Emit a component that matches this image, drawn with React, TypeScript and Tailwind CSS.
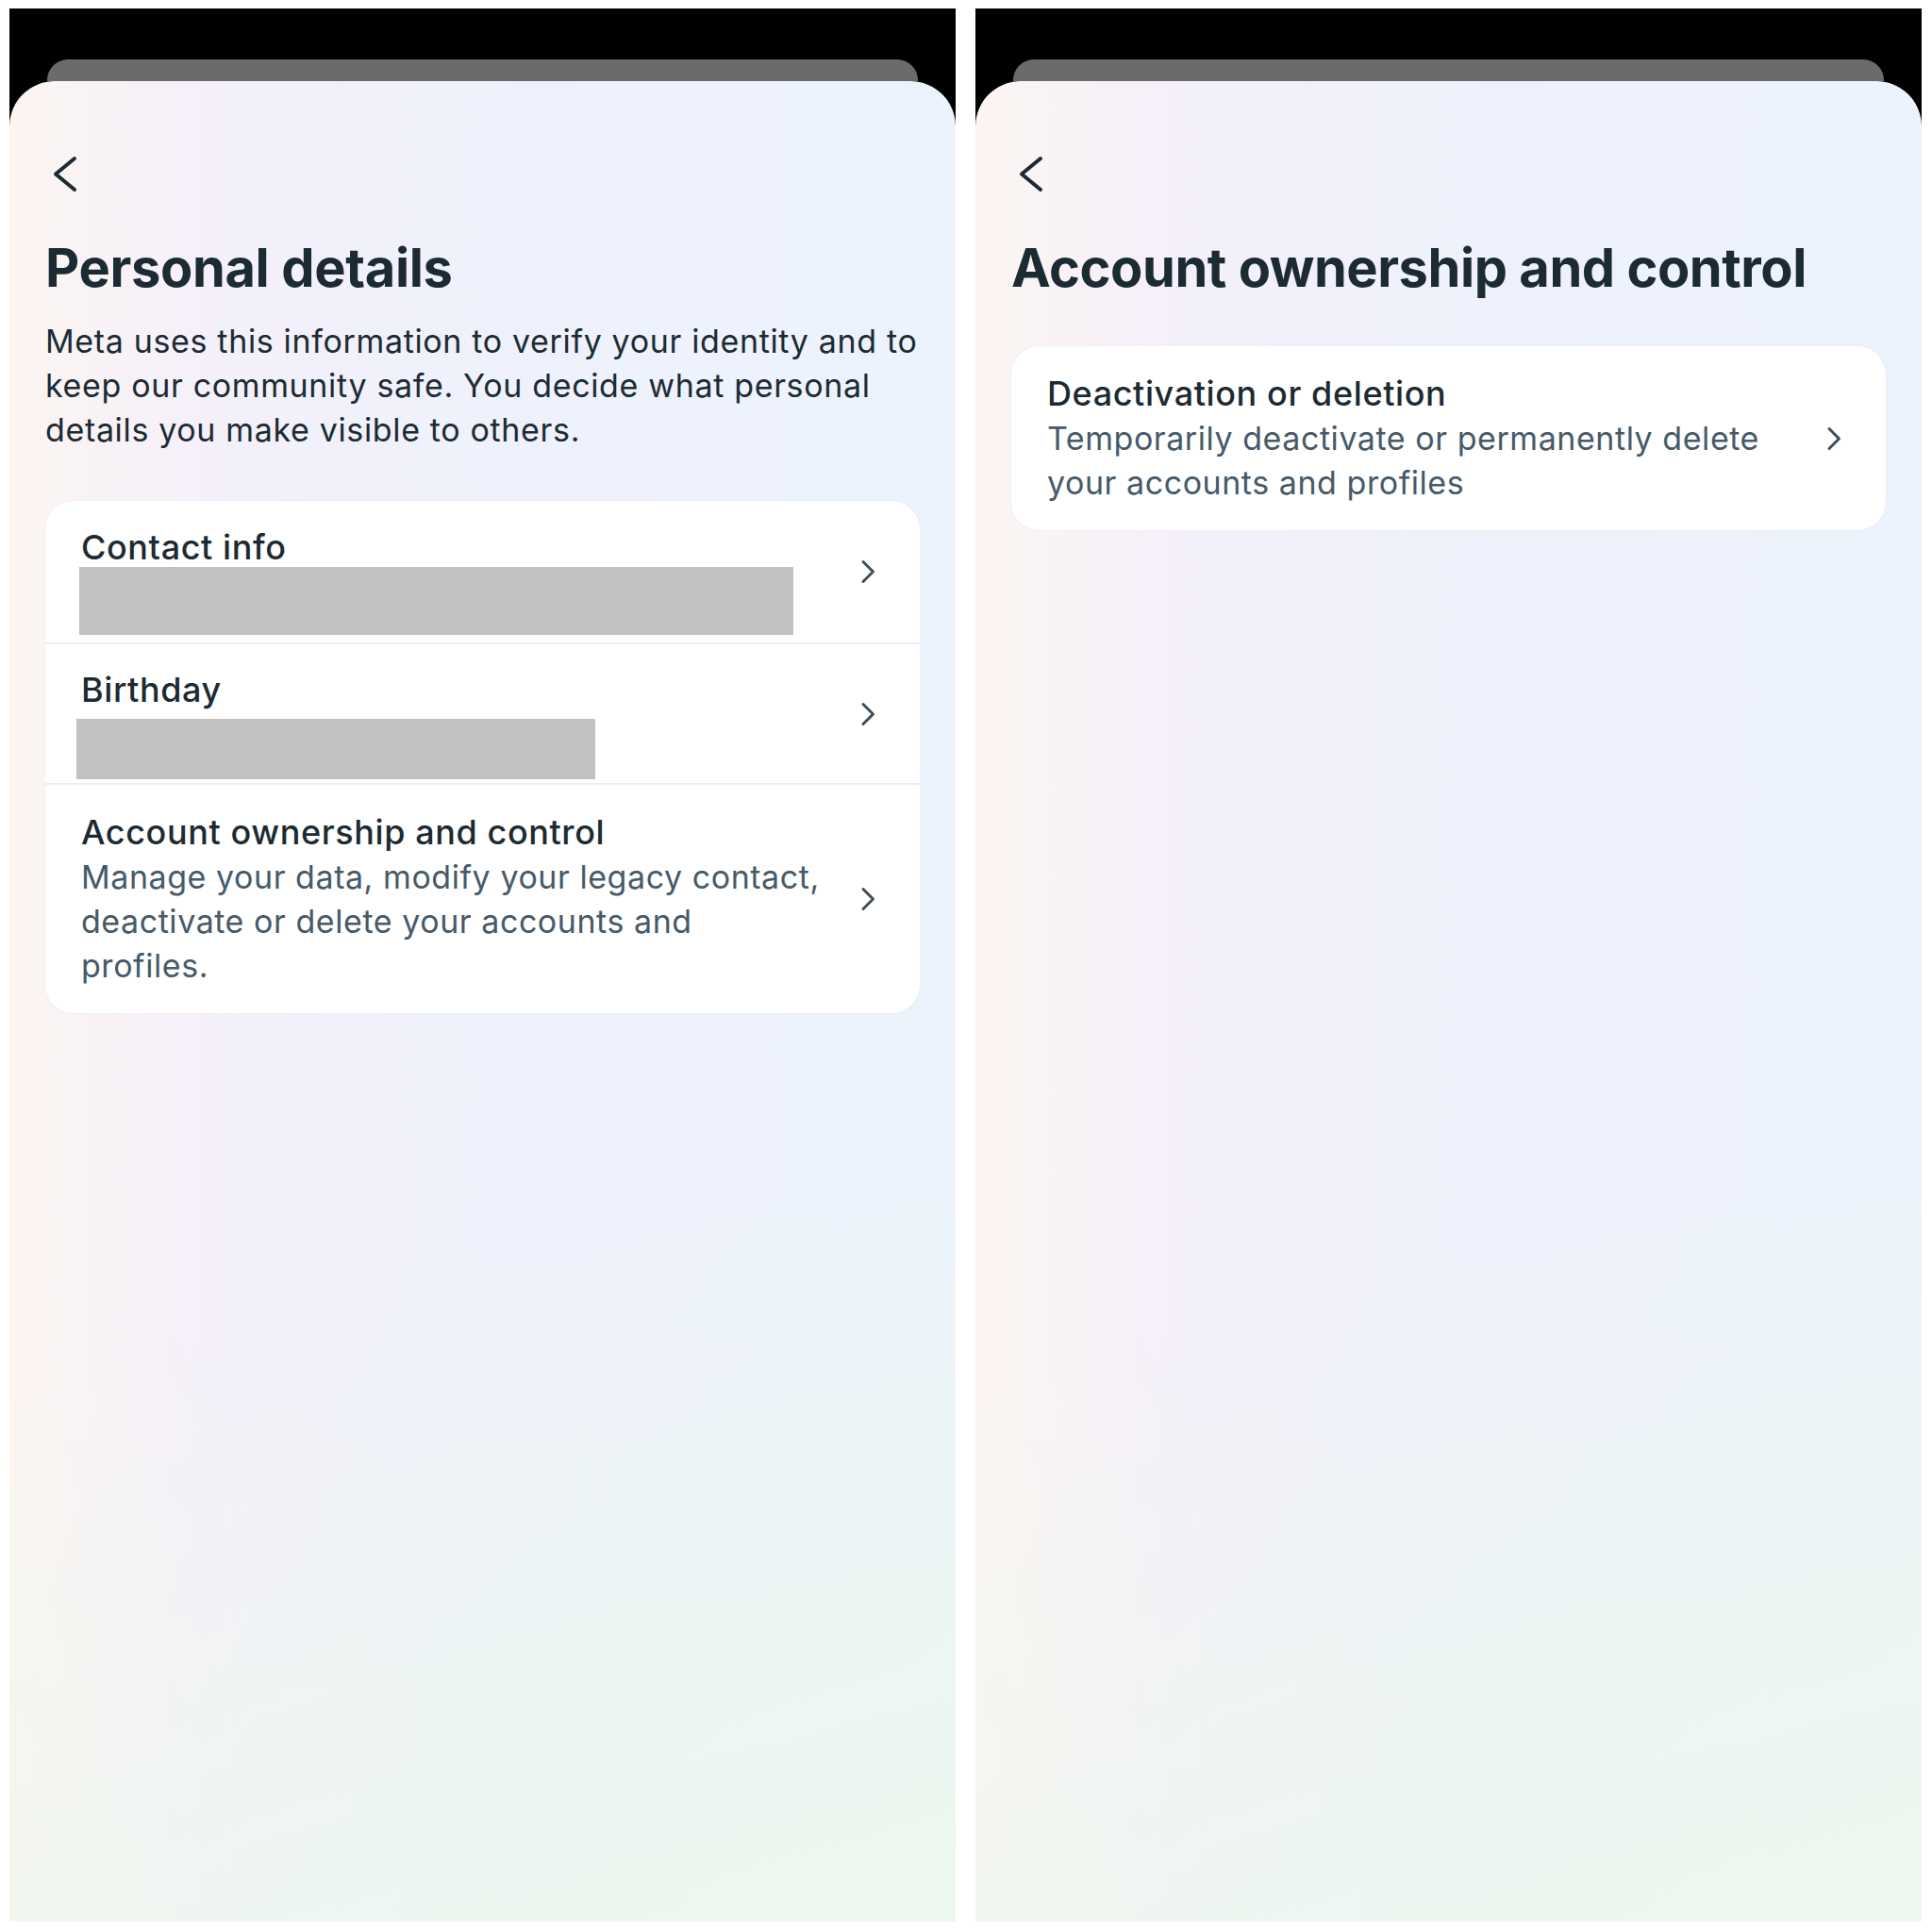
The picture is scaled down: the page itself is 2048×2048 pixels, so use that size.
import * as React from "react";

const font = "font-['Inter','Noto_Sans',sans-serif]";

function BackArrow() {
  return (
    <svg width="28" height="42" viewBox="0 0 28 42" className="ml-[7px] mt-[78px] block">
      <path
        d="M24 4 L4 20.5 L24 37"
        fill="none"
        stroke="#1c2b33"
        strokeWidth="4"
        strokeLinecap="round"
        strokeLinejoin="round"
      />
    </svg>
  );
}

function Chevron() {
  return (
    <svg width="18" height="28" viewBox="0 0 18 28" className="shrink-0">
      <path
        d="M4 3.5 L14.5 14 L4 24.5"
        fill="none"
        stroke="#3d4f5c"
        strokeWidth="3"
        strokeLinecap="round"
        strokeLinejoin="round"
      />
    </svg>
  );
}

function PhoneShell({ children }: { children: React.ReactNode }) {
  return (
    <div className="flex h-[2028px] w-[1003px] flex-col bg-black pt-[54px]">
      <div className="mx-[40px] h-[23px] rounded-t-[22px] bg-[#6b6b6b]" />
      <div className="flex-1 rounded-t-[48px] bg-[linear-gradient(165deg,rgba(255,255,255,0)_62%,rgba(236,248,237,0.95)_100%),linear-gradient(90deg,#fcf5f2_0%,#f5f0fa_20%,#eff1fb_45%,#ecf3fd_100%)] px-[38px]">
        <BackArrow />
        {children}
      </div>
    </div>
  );
}

function SettingRow({
  children,
  className,
}: {
  children: React.ReactNode;
  className: string;
}) {
  return (
    <div className="flex items-center border-[#eceef1] pl-[38px] pr-[46px] [&+&]:border-t-2">
      <div className={`min-w-0 flex-1 ${className}`}>{children}</div>
      <Chevron />
    </div>
  );
}

const rowTitle = "text-[36px] font-medium leading-[47px] tracking-[0.6px] text-[#1c2b33]";
const rowSub = "whitespace-nowrap text-[34px] leading-[47px] tracking-[0.55px] text-[#465a69]";

function PersonalDetails() {
  return (
    <PhoneShell>
      <h1 className="mt-[44px] text-[56px] font-bold leading-[68px] tracking-[-0.35px] text-[#1c2b33]">
        Personal details
      </h1>
      <p className="mt-[20px] whitespace-nowrap text-[34px] leading-[47px] tracking-[0.65px] text-[#1c2b33]">
        Meta uses this information to verify your identity and to
        <br />
        keep our community safe. You decide what personal
        <br />
        details you make visible to others.
      </p>

      <div className="mt-[52px] overflow-hidden rounded-[30px] bg-white shadow-[0_0_3px_rgba(30,50,80,0.05)]">
        <SettingRow className="pb-[8px] pt-[26px]">
          <p className={rowTitle}>Contact info</p>
          <div className="-mt-[3px] ml-[-2px] h-[72px] w-[757px] bg-[#c1c1c1]" />
        </SettingRow>

        <SettingRow className="pb-[4px] pt-[25px]">
          <p className={rowTitle}>Birthday</p>
          <div className="ml-[-5px] mt-[7px] h-[64px] w-[550px] bg-[#c1c1c1]" />
        </SettingRow>

        <SettingRow className="pb-[27px] pt-[27px]">
          <p className={rowTitle}>Account ownership and control</p>
          <p className={rowSub}>
            Manage your data, modify your legacy contact,
            <br />
            deactivate or delete your accounts and
            <br />
            profiles.
          </p>
        </SettingRow>
      </div>
    </PhoneShell>
  );
}

function AccountOwnership() {
  return (
    <PhoneShell>
      <h1 className="mt-[44px] whitespace-nowrap text-[56px] font-bold leading-[68px] tracking-[-0.45px] text-[#1c2b33]">
        Account ownership and control
      </h1>

      <div className="mt-[49px] rounded-[30px] bg-white shadow-[0_0_3px_rgba(30,50,80,0.05)]">
        <SettingRow className="pb-[27px] pt-[27px]">
          <p className={rowTitle}>Deactivation or deletion</p>
          <p className={rowSub}>
            Temporarily deactivate or permanently delete
            <br />
            your accounts and profiles
          </p>
        </SettingRow>
      </div>
    </PhoneShell>
  );
}

export default function App() {
  return (
    <div className={`flex h-[2048px] w-[2048px] gap-[21px] bg-white px-[10px] pt-[9px] ${font}`}>
      <PersonalDetails />
      <AccountOwnership />
    </div>
  );
}
